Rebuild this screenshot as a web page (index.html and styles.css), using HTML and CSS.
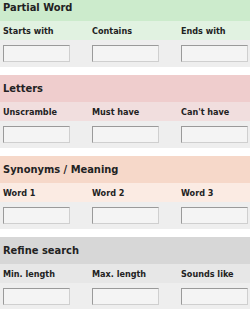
FILE: index.html
```html
<!DOCTYPE html>
<html lang="en">
<head>
  <meta charset="UTF-8" />
  <title>Word Search</title>
  <link rel="stylesheet" href="styles.css">
</head>
<body>
  <div class="panel">
    <div class="section green">
      <h2>Partial Word</h2>
      <div class="labels">
        <label>Starts with</label>
        <label>Contains</label>
        <label>Ends with</label>
      </div>
      <div class="inputs">
        <input type="text">
        <input type="text">
        <input type="text">
      </div>
    </div>

    <div class="section red">
      <h2>Letters</h2>
      <div class="labels">
        <label>Unscramble</label>
        <label>Must have</label>
        <label>Can't have</label>
      </div>
      <div class="inputs">
        <input type="text">
        <input type="text">
        <input type="text">
      </div>
    </div>

    <div class="section peach">
      <h2>Synonyms / Meaning</h2>
      <div class="labels">
        <label>Word 1</label>
        <label>Word 2</label>
        <label>Word 3</label>
      </div>
      <div class="inputs">
        <input type="text">
        <input type="text">
        <input type="text">
      </div>
    </div>

    <div class="section grey">
      <h2>Refine search</h2>
      <div class="labels">
        <label>Min. length</label>
        <label>Max. length</label>
        <label>Sounds like</label>
      </div>
      <div class="inputs">
        <input type="text">
        <input type="text">
        <input type="text">
      </div>
    </div>
  </div>
</body>
</html>
```
FILE: styles.css
```css
* {
  box-sizing: border-box;
  font-family: 'DejaVu Sans Condensed', 'Liberation Sans', sans-serif;
}
body {
  margin: 0;
  background: #fff;
  color: #222;
}
.panel {
  margin-top: -6px;
}
.section {
  margin-bottom: 8px;
}
h2 {
  margin: 0;
  height: 27px;
  line-height: 27px;
  padding-left: 3px;
  font-size: 11px;
  font-weight: bold;
}
.labels,
.inputs {
  display: grid;
  grid-template-columns: 67px 67px 67px;
  column-gap: 22px;
  padding: 0 2px 0 3px;
}
.labels {
  height: 19px;
  align-items: center;
}
.labels label {
  font-size: 9px;
  font-weight: bold;
  white-space: nowrap;
}
.inputs {
  height: 27px;
  align-items: center;
  background: #eeeeee;
}
.inputs input {
  width: 67px;
  height: 17px;
  margin: 0;
  padding: 0;
  background: #f4f4f4;
  border: 1px solid;
  border-color: #9a9a9a #cfcfcf #cfcfcf #9a9a9a;
}
.green h2 { background: #ccebcc; }
.green .labels { background: #e1f2e1; }
.red h2 { background: #efcdcd; }
.red .labels { background: #f1dede; }
.peach h2 { background: #f6d8c9; }
.peach .labels { background: #fbebe3; }
.grey h2 { background: #d7d7d7; }
.grey .labels { background: #e7e7e7; }
```
